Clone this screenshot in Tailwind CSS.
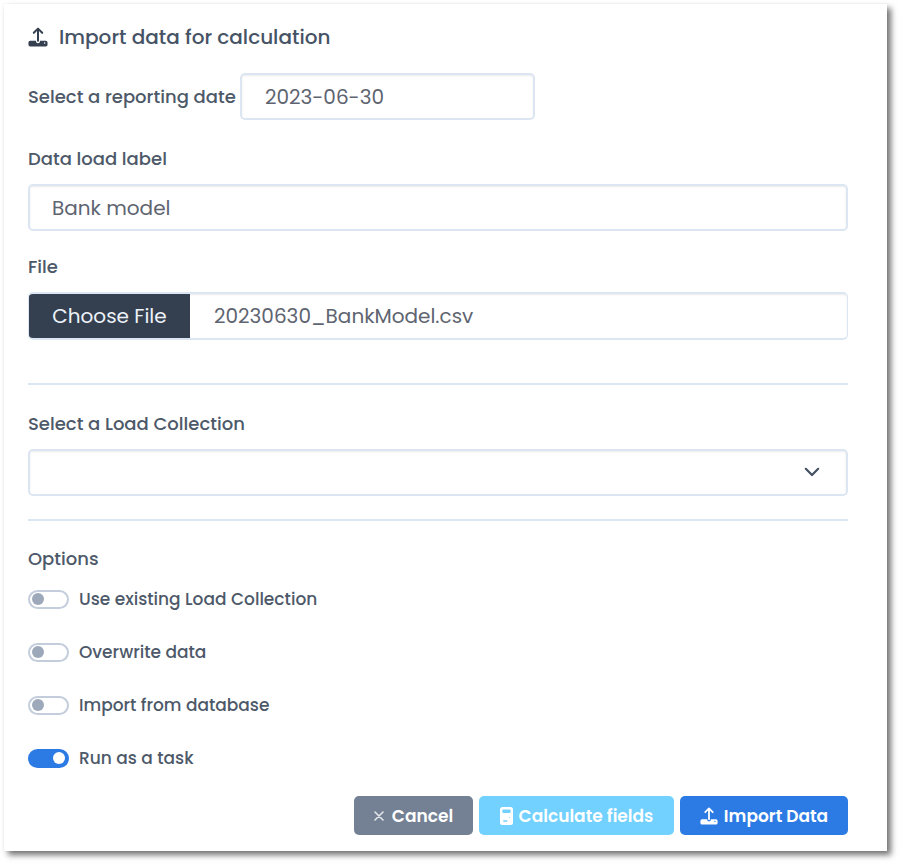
<!DOCTYPE html>
<html lang="en">
<head>
<meta charset="utf-8">
<meta name="viewport" content="width=device-width, initial-scale=1">
<title>Import data for calculation</title>
<script src="https://cdn.jsdelivr.net/npm/@tailwindcss/browser@4"></script>
</head>
<body class="bg-white pt-1 pr-[13px] pb-[13px] pl-1 font-['Poppins','Inter',sans-serif] text-[18px] leading-6 font-medium text-[#4d5969]">
<svg class="hidden" aria-hidden="true">
  <symbol id="upload" viewBox="0 0 22 22">
    <path d="M11 15V2.400M6.400 6.400 11 1.800l4.600 4.600" fill="none" stroke="currentColor" stroke-width="2.200" stroke-linecap="round" stroke-linejoin="round"/>
    <path fill="currentColor" fill-rule="evenodd" d="M2.500 15H8.800V15.600a2.200 2.200 0 0 0 4.400 0V15h6.300a2 2 0 0 1 2 2v2.500a2 2 0 0 1-2 2h-17a2 2 0 0 1-2-2V17a2 2 0 0 1 2-2ZM18.300 16.800a.8.8 0 1 0 0 1.600.8.800 0 0 0 0-1.600Z"/>
  </symbol>
</svg>
<main class="bg-white pt-[18px] pr-[39px] pb-4 pl-6 shadow-[4px_4px_6px_rgba(0,0,0,0.55),0_0_1px_rgba(0,0,0,0.12)]">
  <form class="flex flex-col" onsubmit="return false">
    <h1 class="flex items-center gap-[11px] text-[20px] leading-[30px] font-medium text-[#465365]">
      <svg class="size-5 shrink-0 text-[#344050]" aria-hidden="true"><use href="#upload"/></svg>
      Import data for calculation
    </h1>

    <div class="mt-[21px] flex items-center">
      <label for="date" class="w-[212px] shrink-0 whitespace-nowrap">Select a reporting date</label>
      <input id="date" type="text" value="2023-06-30" class="h-[47px] w-[295px] min-w-0 rounded-[5px] border-2 border-[#dce6f2] px-[23px] text-[20px] font-normal text-[#5e6470] shadow-[inset_0_1px_2px_rgba(0,0,0,0.08)]">
    </div>

    <label for="label" class="mt-[27px]">Data load label</label>
    <input id="label" type="text" value="Bank model" class="mt-[13px] h-[47px] w-full rounded-[5px] border-2 border-[#dce6f2] px-[22px] text-[20px] font-normal text-[#5e6470] shadow-[inset_0_1px_2px_rgba(0,0,0,0.08)]">

    <label for="file" class="mt-6">File</label>
    <input id="file" type="file" class="mt-[13px] h-12 w-full overflow-hidden rounded-[5px] border border-y-2 border-[#dce6f2] text-[20px] leading-[44px] font-normal text-[#5e6470] shadow-[inset_0_1px_2px_rgba(0,0,0,0.08)] file:mr-6 file:h-11 file:w-[161px] file:bg-[#344050] file:text-[#edf2f9]">

    <hr class="mt-[43px] border-t-2 border-[#dce6f2]">

    <label for="collection" class="mt-[27px]">Select a Load Collection</label>
    <div class="relative mt-[13px]">
      <select id="collection" class="block h-[47px] w-full appearance-none rounded-[5px] border-2 border-[#dce6f2] bg-white px-[23px] text-[20px] font-normal text-[#5e6470] shadow-[inset_0_1px_2px_rgba(0,0,0,0.08)]"><option></option></select>
      <svg class="pointer-events-none absolute top-[14px] right-[27px] size-[18px]" viewBox="0 0 18 18" fill="none" stroke="#445062" stroke-width="2.200" stroke-linecap="round" stroke-linejoin="round" aria-hidden="true"><path d="M2.800 5.800 9 12l6.200-6.200"/></svg>
    </div>

    <hr class="mt-[23px] border-t-2 border-[#dce6f2]">

    <fieldset class="mt-[26px]">
      <legend>Options</legend>
      <div class="mt-4 flex flex-col gap-[29px] text-[17px]">
        <label class="flex items-center gap-[10px]">
          <input type="checkbox" role="switch" class="flex h-[19px] w-[41px] shrink-0 appearance-none items-center rounded-full border-2 border-[#c3cddc] bg-white px-[2px] before:size-3 before:rounded-full before:bg-[#9da9bb] checked:justify-end checked:border-[#2c7be5] checked:bg-[#2c7be5] checked:before:bg-white">
          Use existing Load Collection
        </label>
        <label class="flex items-center gap-[10px]">
          <input type="checkbox" role="switch" class="flex h-[19px] w-[41px] shrink-0 appearance-none items-center rounded-full border-2 border-[#c3cddc] bg-white px-[2px] before:size-3 before:rounded-full before:bg-[#9da9bb] checked:justify-end checked:border-[#2c7be5] checked:bg-[#2c7be5] checked:before:bg-white">
          Overwrite data
        </label>
        <label class="flex items-center gap-[10px]">
          <input type="checkbox" role="switch" class="flex h-[19px] w-[41px] shrink-0 appearance-none items-center rounded-full border-2 border-[#c3cddc] bg-white px-[2px] before:size-3 before:rounded-full before:bg-[#9da9bb] checked:justify-end checked:border-[#2c7be5] checked:bg-[#2c7be5] checked:before:bg-white">
          Import from database
        </label>
        <label class="flex items-center gap-[10px]">
          <input type="checkbox" role="switch" checked class="flex h-[19px] w-[41px] shrink-0 appearance-none items-center rounded-full border-2 border-[#c3cddc] bg-white px-[2px] before:size-3 before:rounded-full before:bg-[#9da9bb] checked:justify-end checked:border-[#2c7be5] checked:bg-[#2c7be5] checked:before:bg-white">
          Run as a task
        </label>
      </div>
    </fieldset>

    <div class="mt-[26px] flex flex-wrap justify-end gap-[6px] text-[17px] font-semibold text-white">
      <button type="button" class="flex h-[39px] min-w-[119px] items-center justify-center gap-2 rounded-[5px] bg-[#748194] px-4">
        <svg class="size-[10px] shrink-0" viewBox="0 0 10 10" fill="none" stroke="#e3e6ea" stroke-width="1.600" stroke-linecap="round" aria-hidden="true"><path d="m1 1 8 8M9 1 1 9"/></svg>
        Cancel
      </button>
      <button type="button" class="flex h-[39px] min-w-[195px] items-center justify-center gap-[6px] rounded-[5px] bg-[#72d1ff] px-4">
        <svg class="h-[18px] w-[13px] shrink-0" viewBox="0 0 13 18" aria-hidden="true"><rect width="13" height="18" rx="2.500" fill="#fff"/><rect x="2.300" y="2.500" width="8.400" height="3.500" rx="1.200" fill="#72d1ff"/><path d="M3.800 14h3" stroke="#72d1ff" stroke-width="1.600" stroke-linecap="round"/><circle cx="9.500" cy="10.500" r=".5" fill="#72d1ff"/></svg>
        Calculate fields
      </button>
      <button type="submit" class="flex h-[39px] min-w-[168px] items-center justify-center gap-[6px] rounded-[5px] bg-[#2c7be5] px-4">
        <svg class="size-[18px] shrink-0" aria-hidden="true"><use href="#upload"/></svg>
        Import Data
      </button>
    </div>
  </form>
</main>
<script>
  const selection = new DataTransfer();
  selection.items.add(new File([""], "20230630_BankModel.csv", { type: "text/csv" }));
  document.getElementById("file").files = selection.files;
</script>
</body>
</html>
